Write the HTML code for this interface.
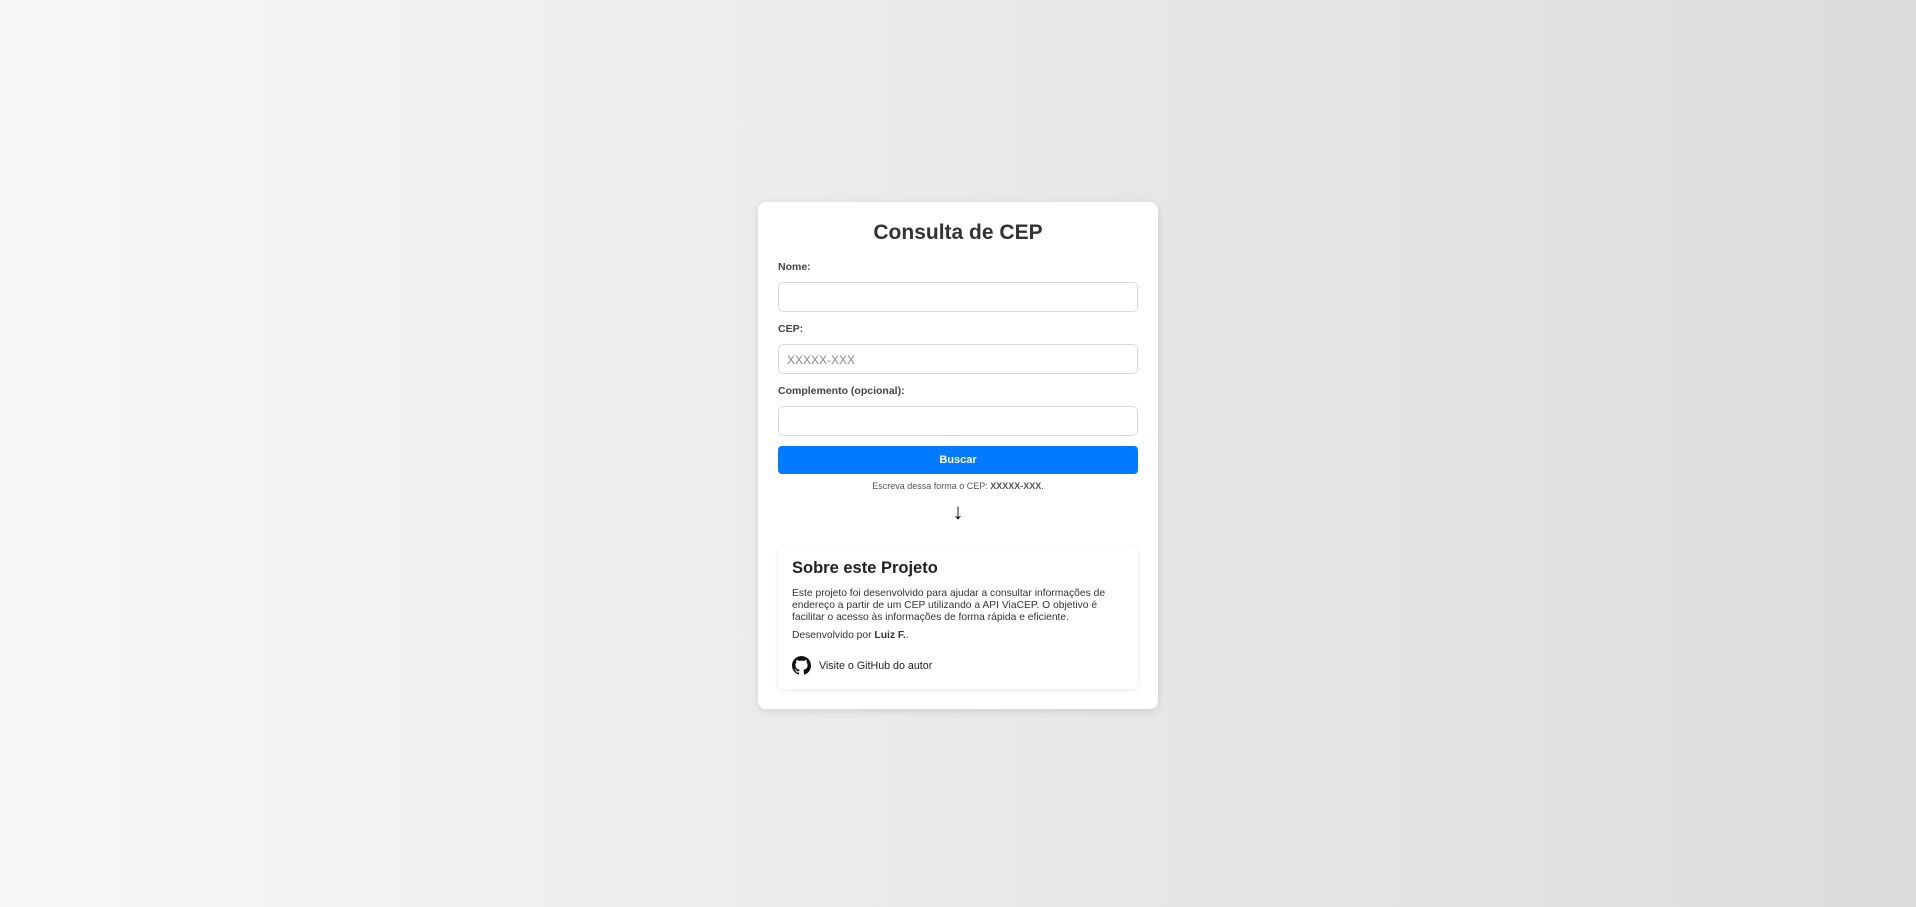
<!DOCTYPE html>
<html><head><meta charset="utf-8"><style>
*{box-sizing:border-box;margin:0;padding:0}
html,body{width:1916px;height:907px;overflow:hidden}
body{background:linear-gradient(90deg,#f7f7f7,#dcdcdc);font-family:"Liberation Sans",Arial,sans-serif;position:relative}
.card{position:absolute;left:758px;top:202px;width:400px;height:507px;background:#fff;border-radius:8px;box-shadow:0 2px 8px rgba(0,0,0,.12)}
h1{position:absolute;left:0;width:400px;top:19px;text-align:center;font-size:21px;color:#333;font-weight:bold}
label{position:absolute;left:20px;font-size:10.5px;font-weight:bold;color:#444}
.in{position:absolute;left:20px;width:360px;height:30px;border:1px solid #dadada;border-radius:5px;font-size:12px;color:#888;padding:8px 8px}
.btn{position:absolute;left:20px;top:244px;width:360px;height:28px;background:#007bff;border-radius:4px;color:#fff;font-size:11px;font-weight:bold;text-align:center;line-height:28px}
.hint{position:absolute;left:0;width:400px;top:279px;text-align:center;font-size:9px;color:#555}
.arrow{position:absolute;left:0;width:400px;top:297px;text-align:center;font-size:22px;color:#000}
.about{position:absolute;left:20px;top:344px;width:360px;height:143px;border-radius:6px;box-shadow:0 1px 5px rgba(0,0,0,.1);background:#fff}
.about h2{position:absolute;left:14px;top:13px;font-size:16.5px;color:#222;font-weight:bold}
.about p{position:absolute;left:14px;width:340px;font-size:10.3px;color:#333;line-height:12px}
.gh{position:absolute;left:14px;top:110px;display:flex;align-items:center;font-size:10.7px;color:#222}
</style></head><body>
<div class="card">
<h1>Consulta de CEP</h1>
<label style="top:59px">Nome:</label>
<div class="in" style="top:80px"></div>
<label style="top:121px">CEP:</label>
<div class="in" style="top:142px">XXXXX-XXX</div>
<label style="top:183px">Complemento (opcional):</label>
<div class="in" style="top:204px"></div>
<div class="btn">Buscar</div>
<div class="hint">Escreva dessa forma o CEP: <b>XXXXX-XXX</b>.</div>
<div class="arrow">↓</div>
<div class="about">
<h2>Sobre este Projeto</h2>
<p style="top:42px">Este projeto foi desenvolvido para ajudar a consultar informações de endereço a partir de um CEP utilizando a API ViaCEP. O objetivo é facilitar o acesso às informações de forma rápida e eficiente.</p>
<p style="top:84px">Desenvolvido por <b>Luiz F.</b>.</p>
<div class="gh"><svg width="19" height="19" viewBox="0 0 16 16"><path fill="#111" d="M8 0C3.58 0 0 3.580 0 8c0 3.54 2.29 6.53 5.47 7.59.4.07.55-.17.55-.38v-1.330c-2.23.48-2.7-1.070-2.7-1.070-.36-.92-.89-1.170-.89-1.170-.73-.5.06-.49.06-.49.8.06 1.230.83 1.230.83.72 1.220 1.870.87 2.330.66.07-.52.28-.87.5-1.070-1.780-.2-3.650-.89-3.650-3.950 0-.87.31-1.590.82-2.150-.08-.2-.36-1.020.08-2.120 0 0 .67-.21 2.200.82a7.6 7.6 0 014 0c1.530-1.040 2.200-.82 2.200-.82.44 1.100.16 1.920.08 2.120.51.56.82 1.270.82 2.150 0 3.070-1.870 3.750-3.650 3.950.29.25.54.73.54 1.480v2.200c0 .21.15.46.55.38A8.010 8.010 0 0016 8c0-4.420-3.580-8-8-8z"/></svg><span style="margin-left:8px">Visite o GitHub do autor</span></div>
</div>
</div>
</body></html>
